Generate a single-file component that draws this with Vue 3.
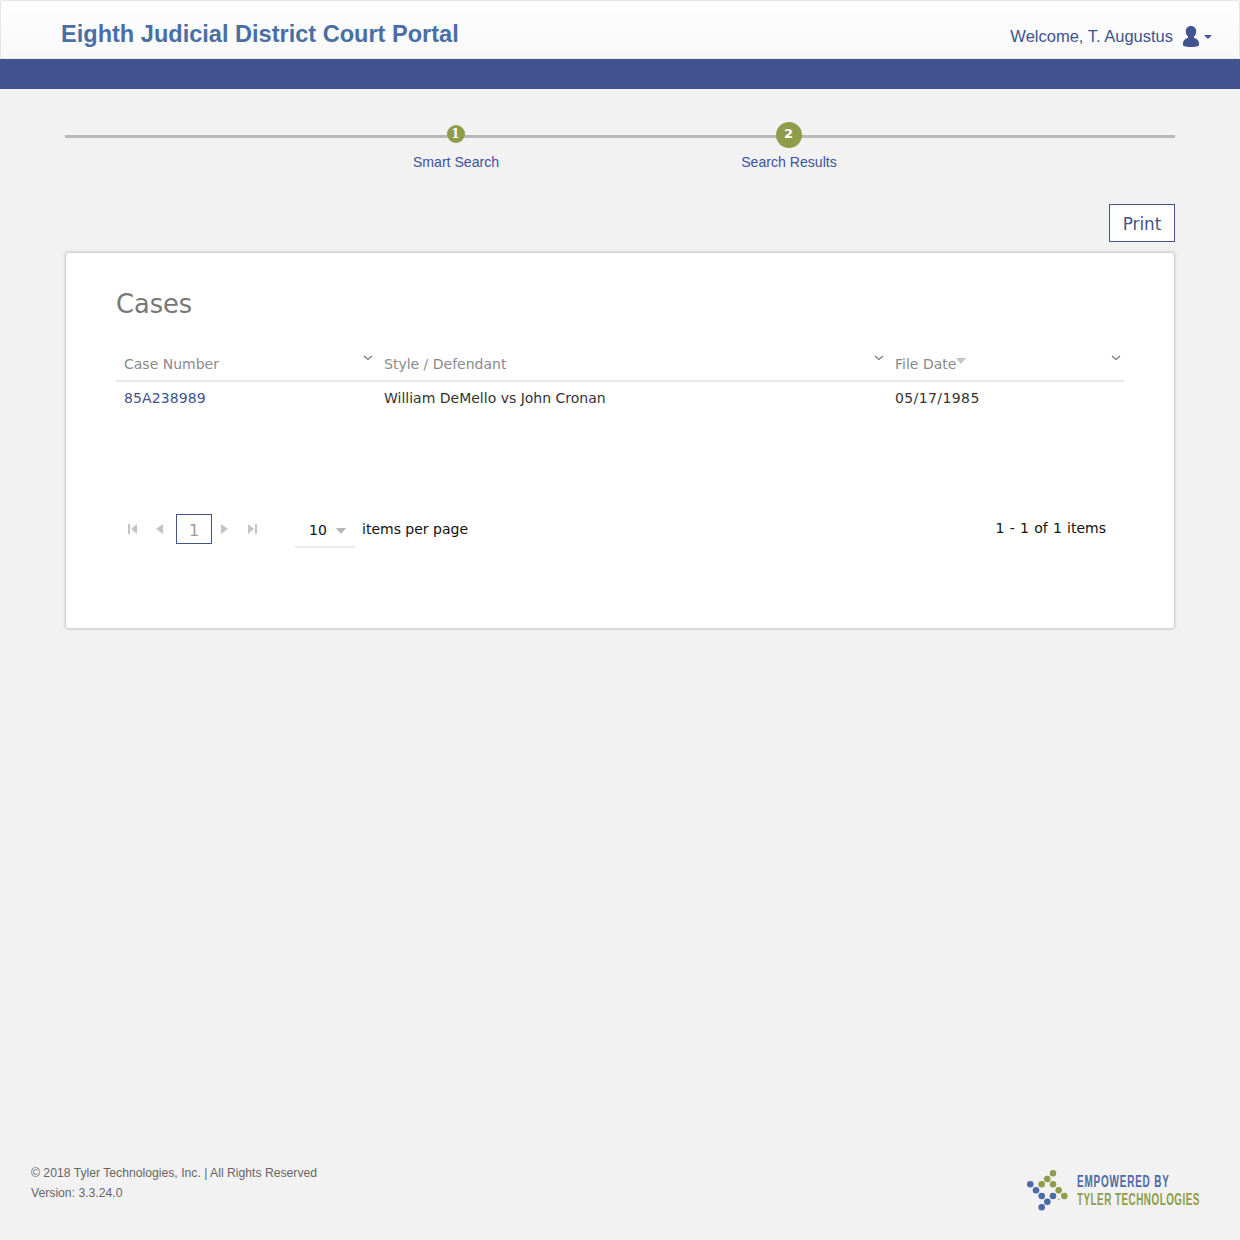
<template>
  <div class="page">
    <header class="topbar">
      <h1 class="portal-title">Eighth Judicial District Court Portal</h1>
      <div class="user-menu">
        <span>Welcome, T. Augustus</span>
        <svg class="user-icon" width="16" height="21" viewBox="0 0 16 21">
          <path fill="#415390" d="M8 0c3.200 0 5.200 2.300 5.200 5.400 0 2.100-.9 3.900-2.100 5-.5.5-.4 1.300.3 1.600 2.500 1 4.600 2.300 4.600 5.200v1.300C16 20 14.500 21 8 21S0 20 0 18.500v-1.300c0-2.900 2.100-4.200 4.600-5.200.7-.3.8-1.100.3-1.600-1.200-1.100-2.100-2.900-2.100-5C2.800 2.300 4.800 0 8 0z" />
        </svg>
        <span class="caret"></span>
      </div>
    </header>
    <div class="band"></div>

    <main class="content">
      <div class="stepper">
        <div class="step" v-for="step in steps" :key="step.num">
          <div class="dot-slot">
            <span class="dot" :class="{ current: step.current }">{{ step.num }}</span>
          </div>
          <span class="step-label">{{ step.label }}</span>
        </div>
      </div>

      <div class="actions">
        <button class="print-btn" type="button">Print</button>
      </div>

      <section class="card">
        <h2 class="card-title">Cases</h2>
        <div class="grid-row grid-head">
          <div class="cell" v-for="col in columns" :key="col.label">
            <span>{{ col.label }}</span>
            <span v-if="col.sorted" class="sort-arrow"></span>
            <svg class="chev" width="10" height="6" viewBox="0 0 10 6">
              <path d="M1 1l4 3.500L9 1" fill="none" stroke="#777" stroke-width="1.200" />
            </svg>
          </div>
        </div>
        <div class="grid-row grid-body">
          <div class="cell"><a class="case-link" href="#">85A238989</a></div>
          <div class="cell">William DeMello vs John Cronan</div>
          <div class="cell date">05/17/1985</div>
        </div>

        <div class="pager">
          <div class="pager-nav">
            <svg width="10" height="10" viewBox="0 0 10 10"><path fill="#c4c4c4" d="M0 0h2v10H0zM9 0v10L3 5z" /></svg>
            <svg class="nav-prev" width="7" height="10" viewBox="0 0 7 10"><path fill="#c4c4c4" d="M7 0v10L0 5z" /></svg>
            <span class="page-box">1</span>
            <svg class="nav-next" width="7" height="10" viewBox="0 0 7 10"><path fill="#c4c4c4" d="M0 0v10l7-5z" /></svg>
            <svg class="nav-last" width="10" height="10" viewBox="0 0 10 10"><path fill="#c4c4c4" d="M10 0H8v10h2zM1 0v10l6-5z" /></svg>
          </div>
          <div class="page-size">
            <span>10</span>
            <span class="size-arrow"></span>
          </div>
          <span class="per-page">items per page</span>
          <span class="pager-info">1 - 1 of 1 items</span>
        </div>
      </section>
    </main>

    <footer class="footer">
      <div class="legal">
        <div>© 2018 Tyler Technologies, Inc. | All Rights Reserved</div>
        <div>Version: 3.3.24.0</div>
      </div>
      <div class="brand">
        <svg width="43" height="43" viewBox="0 0 43 43">
          <circle v-for="(d, i) in logoDots" :key="i" :cx="d[0]" :cy="d[1]" r="3.300" :fill="d[2]" />
          <circle cx="32.700" cy="30.300" r="1" fill="#b5b98c" />
        </svg>
        <div class="brand-text">
          <div class="brand-top">EMPOWERED BY</div>
          <div class="brand-bottom">TYLER TECHNOLOGIES</div>
        </div>
      </div>
    </footer>
  </div>
</template>

<script setup>
const steps = [
  { num: 1, label: 'Smart Search', current: false },
  { num: 2, label: 'Search Results', current: true },
]

const columns = [
  { label: 'Case Number' },
  { label: 'Style / Defendant' },
  { label: 'File Date', sorted: true },
]

const blue = '#4a6aa8'
const green = '#8f9c4a'
const logoDots = [
  [27, 4.300, green], [21.300, 10, green], [15.700, 15.300, green], [27, 15.300, green],
  [32.700, 21.300, green], [38.300, 27, green],
  [4.300, 15.300, blue], [10, 21.300, blue], [15.700, 27, blue], [21.300, 32.700, blue],
  [15.700, 38.300, blue], [27, 27, blue],
]
</script>

<style>
html, body {
  margin: 0;
  background: #f2f2f2;
}
</style>

<style scoped>
.page {
  min-height: 1240px;
  display: flex;
  flex-direction: column;
  background: #f2f2f2;
  font-family: "DejaVu Sans", Verdana, sans-serif;
}

.topbar {
  box-sizing: border-box;
  height: 59px;
  display: flex;
  justify-content: space-between;
  padding: 0 27px 0 61px;
  background: linear-gradient(#fff, #f8f8f8);
  border: 1px solid #e7e7e7;
  border-radius: 4px 4px 0 0;
  font-family: "Liberation Sans", Arial, sans-serif;
}

.portal-title {
  margin: 19px 0 0 -1px;
  font-size: 23.550px;
  line-height: 28px;
  font-weight: bold;
  color: #4a6fa5;
}

.user-menu {
  display: flex;
  align-items: center;
  height: 21px;
  margin-top: 25px;
  font-size: 16.500px;
  color: #415390;
}

.user-icon {
  margin-left: 10px;
}

.caret {
  margin-left: 5px;
  border-top: 4px solid #415390;
  border-left: 4px solid transparent;
  border-right: 4px solid transparent;
}

.band {
  height: 30px;
  background: #415390;
}

.content {
  padding: 0 65px;
}

.stepper {
  display: flex;
  margin-top: 33px;
  padding-left: 224px;
  height: 48px;
  background: linear-gradient(#b9b9b9, #b9b9b9) no-repeat 0 13px / 100% 3px;
}

.step {
  width: 333px;
  display: flex;
  flex-direction: column;
  align-items: center;
  font-family: "Liberation Sans", Arial, sans-serif;
}

.dot-slot {
  height: 26px;
  display: flex;
  align-items: center;
}

.dot {
  width: 18px;
  height: 18px;
  margin-top: -2px;
  border-radius: 50%;
  background: #8f9c4a;
  color: #fff;
  font: bold 12px/18px "DejaVu Serif", serif;
  text-align: center;
}

.dot.current {
  width: 26px;
  height: 26px;
  margin-top: 0;
  font: bold 13px/24px "DejaVu Sans", sans-serif;
}

.step-label {
  margin-top: 6px;
  padding-left: 1px;
  font-size: 14.100px;
  line-height: 16px;
  color: #3f51a0;
}

.actions {
  display: flex;
  justify-content: flex-end;
  margin-top: 34px;
}

.print-btn {
  box-sizing: border-box;
  width: 66px;
  height: 38px;
  padding: 2px 0 0;
  background: #fff;
  border: 1px solid #415390;
  color: #415390;
  font: 16.800px "DejaVu Sans", sans-serif;
}

.card {
  box-sizing: border-box;
  height: 375px;
  margin: 11px 1px 0;
  padding: 0 50px;
  background: #fff;
  border-radius: 3px;
  box-shadow: 0 0 3px 1px rgba(0, 0, 0, 0.2);
}

.card-title {
  margin: 0;
  padding-top: 35px;
  font-size: 25.700px;
  line-height: 32px;
  font-weight: normal;
  color: #777;
}

.grid-row {
  display: grid;
  grid-template-columns: 260px 511px 237px;
  font-size: 14px;
}

.grid-head {
  height: 33px;
  margin-top: 27px;
  border-bottom: 2px solid #e8e8e8;
  color: #8a8a8a;
}

.grid-head .cell {
  position: relative;
  line-height: 20px;
  padding-top: 7px;
}

.cell {
  padding-left: 8px;
}

.date {
  letter-spacing: 0.400px;
}

.sort-arrow {
  display: inline-block;
  vertical-align: 5px;
  border-top: 6px solid #c4c4c4;
  border-left: 5px solid transparent;
  border-right: 5px solid transparent;
}

.chev {
  position: absolute;
  top: 8px;
  right: 3px;
}

.grid-body {
  color: #333;
  line-height: 20px;
  padding-top: 6px;
}

.case-link {
  color: #415390;
  text-decoration: none;
  letter-spacing: 0.100px;
}

.pager {
  display: flex;
  align-items: flex-start;
  margin-top: 106px;
  font-size: 14px;
  color: #111;
}

.pager-nav {
  display: flex;
  align-items: center;
  height: 30px;
  margin-left: 12px;
}

.nav-prev {
  margin-left: 18px;
}

.page-box {
  box-sizing: border-box;
  width: 36px;
  height: 30px;
  margin: 0 9px 0 13px;
  padding-top: 2px;
  border: 1px solid #415390;
  text-align: center;
  line-height: 28px;
  font-size: 16px;
  color: #9a9a9a;
}

.nav-last {
  margin-left: 19px;
}

.page-size {
  box-sizing: border-box;
  width: 62px;
  height: 34px;
  margin-left: 37px;
  padding: 6px 0 0 15px;
  display: flex;
  align-items: flex-start;
  line-height: 20px;
  border-bottom: 2px solid #ececec;
  border-radius: 0 0 4px 4px;
}

.size-arrow {
  margin: 8px 0 0 9px;
  border-top: 6px solid #b5b5b5;
  border-left: 5px solid transparent;
  border-right: 5px solid transparent;
}

.per-page {
  margin-left: 6px;
  line-height: 30px;
}

.pager-info {
  margin-left: auto;
  margin-right: 18px;
  margin-top: -1px;
  line-height: 30px;
  word-spacing: 0.800px;
}

.footer {
  margin-top: auto;
  display: flex;
  justify-content: space-between;
  height: 85px;
  padding: 0 40px 0 31px;
}

.legal {
  padding-top: 8px;
  font-family: "Liberation Sans", Arial, sans-serif;
  font-size: 12.200px;
  line-height: 20px;
  color: #666;
}

.brand {
  display: flex;
  align-items: flex-start;
  margin-top: 14px;
}

.brand-text {
  width: 123px;
  margin-left: 8px;
  padding-top: 4px;
  font-family: "Liberation Sans", sans-serif;
  font-weight: bold;
  font-size: 16px;
  line-height: 18px;
  white-space: nowrap;
  transform: scaleX(0.620);
  transform-origin: left top;
}

.brand-top {
  color: #4a6aa8;
  letter-spacing: 1.330px;
}

.brand-bottom {
  color: #8f9c4a;
  letter-spacing: 0.740px;
}
</style>
